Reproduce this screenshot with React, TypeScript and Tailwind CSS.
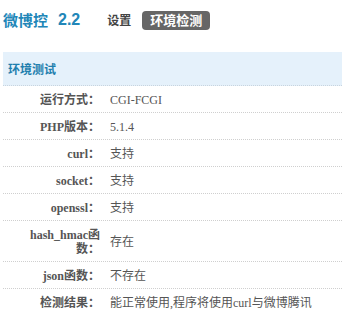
import React from "react";

const rows: { label: string; value: string }[] = [
  { label: "运行方式：", value: "CGI-FCGI" },
  { label: "PHP版本：", value: "5.1.4" },
  { label: "curl：", value: "支持" },
  { label: "socket：", value: "支持" },
  { label: "openssl：", value: "支持" },
  { label: "hash_hmac函数：", value: "存在" },
  { label: "json函数：", value: "不存在" },
  { label: "检测结果：", value: "能正常使用,程序将使用curl与微博腾讯" },
];

export default function App() {
  return (
    <div
      className="w-[343px] h-[326px] bg-white overflow-hidden"
      style={{ fontFamily: '"Liberation Serif", "Noto Sans CJK SC", serif' }}
    >
      <div className="flex items-center h-[40px] pl-[3px]">
        <span
          className="text-[15px] font-bold text-[#2186b8] leading-[20px]"
          style={{ fontFamily: '"Noto Sans CJK SC", sans-serif' }}
        >
          微博控
        </span>
        <span
          className="ml-[10px] text-[16px] font-bold text-[#2186b8] leading-[20px]"
          style={{ fontFamily: '"Liberation Sans", sans-serif' }}
        >
          2.2
        </span>
        <span
          className="ml-[27px] text-[12px] font-bold text-[#444] leading-[20px]"
          style={{ fontFamily: '"Noto Sans CJK SC", sans-serif' }}
        >
          设置
        </span>
        <span
          className="ml-[11px] h-[19px] w-[68px] rounded-[4px] bg-[#666] text-white text-[13px] font-bold flex items-center justify-center"
          style={{ fontFamily: '"Noto Sans CJK SC", sans-serif' }}
        >
          环境检测
        </span>
      </div>
      <div className="ml-[3px] mr-[1px] mt-[12px]">
        <div className="h-[34px] bg-[#e5f1fb] border-b border-dotted border-[#c8d4de] flex items-center pl-[5px]">
          <span
            className="text-[12px] font-bold text-[#1f7fae]"
            style={{ fontFamily: '"Noto Sans CJK SC", sans-serif' }}
          >
            环境测试
          </span>
        </div>
        {rows.map((r, i) => (
          <div
            key={r.label}
            className={`flex items-center pt-[7px] pb-[5px] ${i < rows.length - 1 ? "border-b border-dotted border-[#cfcfcf]" : ""}`}
          >
            <div className="w-[97px] shrink-0 pl-[24px] text-right text-[12px] leading-[14px] font-bold text-[#555]">
              {r.label}
            </div>
            <div className="pl-[10px] text-[12px] leading-[14px] text-[#555] whitespace-nowrap">
              {r.value}
            </div>
          </div>
        ))}
      </div>
    </div>
  );
}
